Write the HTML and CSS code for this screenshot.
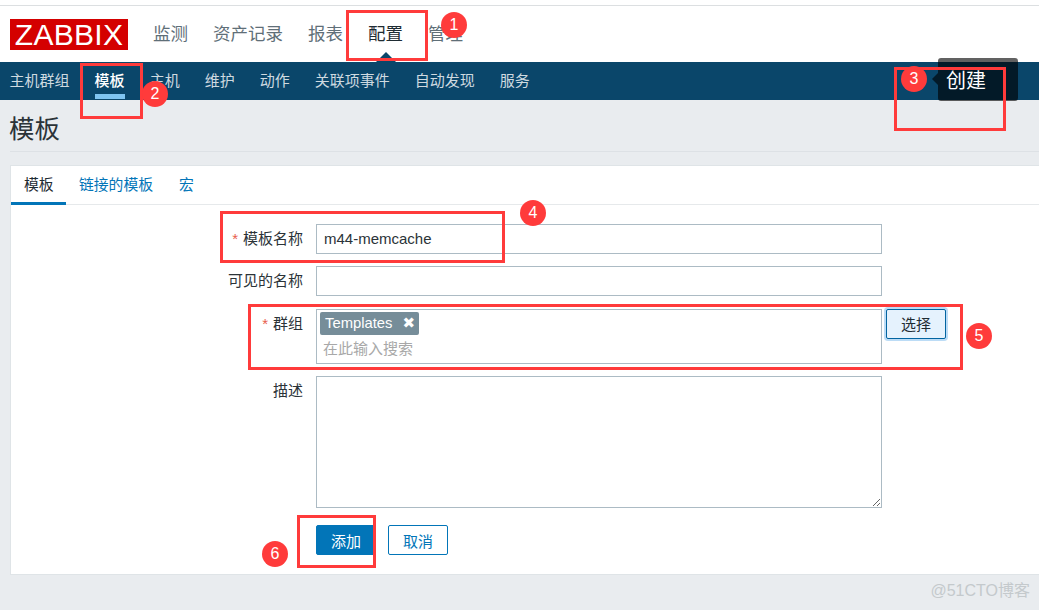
FILE: index.html
```html
<!DOCTYPE html>
<html lang="zh-CN">
<head>
  <meta charset="UTF-8">
  <meta name="viewport" content="width=device-width, initial-scale=1.0">
  <title>模板</title>
  <link rel="stylesheet" href="styles.css">
</head>
<body>
  <div class="page">
    <!-- 顶部导航 -->
    <div class="top-strip"></div>
    <header class="top-bar">
      <div class="logo">ZABBIX</div>
      <nav class="main-nav">
        <a class="main-link">监测</a>
        <a class="main-link">资产记录</a>
        <a class="main-link">报表</a>
        <a class="main-link active">配置</a>
        <a class="main-link">管理</a>
      </nav>
    </header>
    <nav class="sub-nav">
      <a class="sub-link">主机群组</a>
      <a class="sub-link active">模板</a>
      <a class="sub-link">主机</a>
      <a class="sub-link">维护</a>
      <a class="sub-link">动作</a>
      <a class="sub-link">关联项事件</a>
      <a class="sub-link">自动发现</a>
      <a class="sub-link">服务</a>
    </nav>

    <div class="page-title">
      <h1>模板</h1>
    </div>

    <!-- 表单 -->
    <section class="card">
      <div class="tabs">
        <a class="tab active">模板</a>
        <a class="tab">链接的模板</a>
        <a class="tab">宏</a>
      </div>
      <form class="form">
        <div class="row">
          <label class="label"><span class="required">*</span>模板名称</label>
          <input class="field" type="text" value="m44-memcache">
        </div>
        <div class="row">
          <label class="label">可见的名称</label>
          <input class="field" type="text">
        </div>
        <div class="row row-group">
          <label class="label"><span class="required">*</span>群组</label>
          <div class="multiselect">
            <span class="tag">Templates<span class="tag-close">✖</span></span>
            <input class="search" type="text" placeholder="在此输入搜索">
          </div>
          <button class="select-button" type="button">选择</button>
        </div>
        <div class="row">
          <label class="label">描述</label>
          <textarea class="field description"></textarea>
        </div>
        <div class="actions">
          <button class="button primary" type="button">添加</button>
          <button class="button" type="button">取消</button>
        </div>
      </form>
    </section>

    <div class="watermark">@51CTO博客</div>

    <!-- 提示框 -->
    <div class="tooltip">创建</div>

    <!-- 截图上的红色标注 -->
    <div class="mark mark-1"></div>
    <div class="mark mark-2"></div>
    <div class="mark mark-3"></div>
    <div class="mark mark-4"></div>
    <div class="mark mark-5"></div>
    <div class="mark mark-6"></div>
    <div class="badge badge-1">1</div>
    <div class="badge badge-2">2</div>
    <div class="badge badge-3">3</div>
    <div class="badge badge-4">4</div>
    <div class="badge badge-5">5</div>
    <div class="badge badge-6">6</div>
  </div>
</body>
</html>
```

FILE: styles.css
```css
/* Estilos generales */
* {
  box-sizing: border-box;
}

body {
  margin: 0;
  background-color: #e9ecef;
  font-family: "Liberation Sans", "Noto Sans CJK SC", sans-serif;
  font-size: 15px;
  color: #1f2c33;
}

.page {
  position: relative;
  width: 1039px;
  height: 610px;
  overflow: hidden;
}

/* Top bar */
.top-strip {
  height: 6px;
  background-color: #fff;
  border-bottom: 1px solid #dcdfe1;
}

.top-bar {
  display: flex;
  align-items: center;
  height: 56px;
  padding: 0 0 0 10px;
  background-color: #fff;
}

.logo {
  width: 118px;
  height: 31px;
  margin-top: 1px;
  background-color: #d40000;
  color: #fff;
  font-size: 30px;
  line-height: 31px;
  letter-spacing: 0.3px;
  text-align: center;
}

.main-nav {
  display: flex;
  gap: 25px;
  margin: -3px 0 0 25px;
}

.main-link {
  position: relative;
  font-size: 17.5px;
  color: #5f6f78;
}

.main-link.active {
  color: #1f2c33;
}

.main-link.active::after {
  content: "";
  position: absolute;
  left: 8px;
  top: 32px;
  border-left: 10px solid transparent;
  border-right: 10px solid transparent;
  border-bottom: 10px solid #0a466a;
}

/* Sub nav */
.sub-nav {
  display: flex;
  gap: 25px;
  height: 38px;
  padding-left: 9.6px;
  background-color: #0a466a;
}

.sub-link {
  position: relative;
  font-size: 15px;
  line-height: 38px;
  color: #cfdae0;
}

.sub-link.active {
  color: #fff;
  font-weight: 500;
}

.sub-link.active::after {
  content: "";
  position: absolute;
  left: 0;
  right: 0;
  bottom: 1px;
  height: 5px;
  background-color: #7fc4f0;
}

/* Title */
.page-title {
  height: 52px;
  margin: 0 0 13px 10px;
  border-bottom: 1px solid #dde1e5;
}

.page-title h1 {
  margin: 0 0 0 -1px;
  padding-top: 8px;
  font-size: 25.5px;
  font-weight: normal;
  line-height: 42px;
  color: #2b3338;
}

/* Card */
.card {
  margin-left: 10px;
  background-color: #fff;
  border: 1px solid #dfe4e7;
  border-right: none;
}

.tabs {
  display: flex;
  height: 39px;
  border-bottom: 1px solid #e6e9eb;
}

.tab {
  padding: 0 13px;
  font-size: 14.8px;
  line-height: 38px;
  white-space: nowrap;
  color: #0275b8;
}

.tab.active {
  width: 55px;
  height: 39px;
  border-bottom: 3px solid #0275b8;
  color: #1f2c33;
}

/* Formulario */
.form {
  display: flex;
  flex-direction: column;
  padding: 19px 0;
}

.row {
  display: flex;
  gap: 13px;
  margin-bottom: 12px;
}

.row-group {
  margin-top: 1px;
}

.label {
  width: 292px;
  font-size: 15px;
  line-height: 29px;
  text-align: right;
  color: #2b3338;
}

.required {
  margin-right: 5px;
  color: #e8604c;
}

.field {
  width: 566px;
  height: 30px;
  padding: 0 7px 1px;
  border: 1px solid #acbbc4;
  background-color: #fff;
  font-family: inherit;
  font-size: 15px;
  color: #2b3338;
}

.description {
  display: block;
  height: 132px;
  margin-bottom: 5px;
}

.multiselect {
  display: flex;
  flex-direction: column;
  align-items: flex-start;
  width: 566px;
  height: 55px;
  padding: 2px 3px;
  border: 1px solid #acbbc4;
}

.tag {
  display: flex;
  justify-content: space-between;
  align-items: center;
  width: 99px;
  height: 23px;
  padding: 0 4px 1px 5px;
  border-radius: 2px;
  background-color: #768d99;
  color: #fff;
  font-size: 14.8px;
}

.tag-close {
  font-family: "DejaVu Sans", sans-serif;
  font-size: 15px;
}

.search {
  width: 100%;
  height: 26px;
  padding: 0 0 0 3px;
  border: none;
  outline: none;
  font-family: inherit;
  font-size: 15px;
}

.search::placeholder {
  color: #a8a8a8;
}

.select-button {
  width: 60px;
  height: 30px;
  margin-left: -9px;
  padding: 0 0 2px;
  border: 1px solid #0264a0;
  border-radius: 2px;
  background-color: #e5f2fd;
  box-shadow: 0 0 0 2px #bcdcf6;
  font-family: inherit;
  font-size: 15px;
  color: #1f2c33;
}

.actions {
  display: flex;
  gap: 12px;
  margin-left: 305px;
}

.button {
  width: 60px;
  height: 30px;
  padding: 0;
  border: 1px solid #0275b8;
  border-radius: 2px;
  background-color: #fff;
  font-family: inherit;
  font-size: 15px;
  color: #0275b8;
}

.button.primary {
  background-color: #0275b8;
  color: #fff;
}

.watermark {
  position: absolute;
  right: 9px;
  top: 580px;
  font-size: 16px;
  line-height: 22px;
  color: #c4c9cc;
}

/* Tooltip */
.tooltip {
  position: absolute;
  left: 938px;
  top: 58px;
  width: 80px;
  height: 43px;
  padding: 2px 0 0 8px;
  border-radius: 3px;
  background-color: rgba(0, 0, 0, 0.62);
  color: #fff;
  font-size: 20px;
  line-height: 43px;
}

.tooltip::before {
  content: "";
  position: absolute;
  left: -6px;
  top: 15px;
  border-top: 6px solid transparent;
  border-bottom: 6px solid transparent;
  border-right: 6px solid rgba(0, 0, 0, 0.62);
}

/* Marcas rojas */
.mark {
  position: absolute;
  border: 3px solid #ff3b3b;
}

.mark-1 { left: 346px; top: 10px; width: 82px; height: 51px; }
.mark-2 { left: 80px; top: 63px; width: 63px; height: 56px; }
.mark-3 { left: 894px; top: 67px; width: 112px; height: 64px; }
.mark-4 { left: 220px; top: 211px; width: 285px; height: 52px; }
.mark-5 { left: 248px; top: 304px; width: 715px; height: 66px; }
.mark-6 { left: 297px; top: 515px; width: 79px; height: 53px; }

.badge {
  position: absolute;
  width: 26px;
  height: 26px;
  border-radius: 50%;
  background-color: #ff3b3b;
  color: #fff;
  font-size: 16px;
  line-height: 25px;
  text-align: center;
}

.badge-1 { left: 441px; top: 12px; }
.badge-2 { left: 142px; top: 81px; }
.badge-3 { left: 901px; top: 66px; }
.badge-4 { left: 520px; top: 200px; }
.badge-5 { left: 966px; top: 323px; }
.badge-6 { left: 262px; top: 541px; }
```
